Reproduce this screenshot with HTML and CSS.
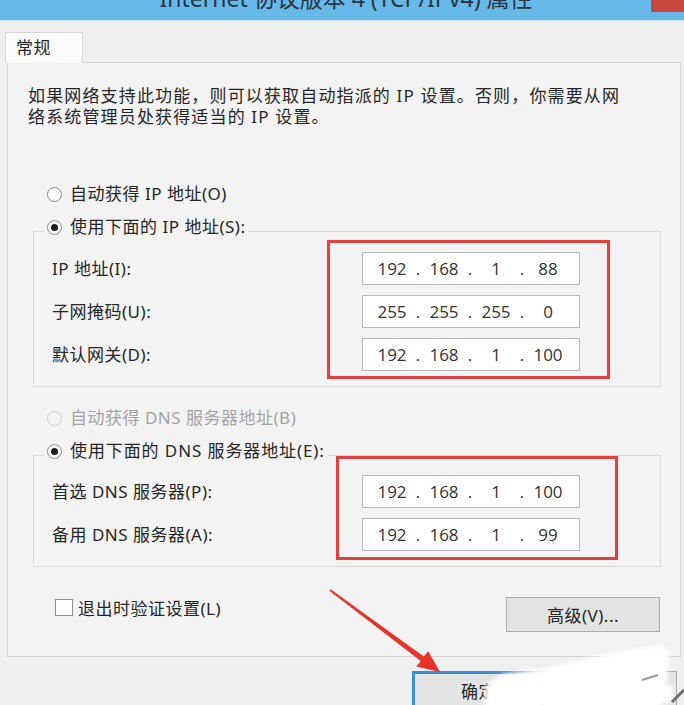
FILE: index.html
```html
<!DOCTYPE html>
<html lang="zh-CN">
<head>
<meta charset="utf-8">
<title>Internet 协议版本 4 (TCP/IPv4) 属性</title>
<link rel="stylesheet" href="styles.css">
</head>
<body>
<div class="window">
  <header class="titlebar">
    <span class="title">Internet 协议版本 4 (TCP/IPv4) 属性</span>
    <span class="close"></span>
  </header>
  <div class="client">
    <nav class="tabs"><div class="tab">常规</div></nav>
    <section class="panel">
      <p class="desc"><span>如果网络支持此功能，则可以获取自动指派的 IP 设置。否则，你需要从网</span><br><span>络系统管理员处获得适当的 IP 设置。</span></p>

      <label class="radio-row first"><input type="radio" name="ip" class="radio"><span>自动获得 IP 地址(O)</span></label>
      <fieldset class="group group-ip">
        <legend><label class="radio-row"><input type="radio" name="ip" class="radio" checked><span>使用下面的 IP 地址(S):</span></label></legend>
        <div class="fields">
          <div class="labels">
            <div class="label">IP 地址(I):</div>
            <div class="label">子网掩码(U):</div>
            <div class="label">默认网关(D):</div>
          </div>
          <div class="mark">
            <div class="ip"><span class="oct">192</span><span class="dot">.</span><span class="oct">168</span><span class="dot">.</span><span class="oct">1</span><span class="dot">.</span><span class="oct">88</span></div>
            <div class="ip"><span class="oct">255</span><span class="dot">.</span><span class="oct">255</span><span class="dot">.</span><span class="oct">255</span><span class="dot">.</span><span class="oct">0</span></div>
            <div class="ip"><span class="oct">192</span><span class="dot">.</span><span class="oct">168</span><span class="dot">.</span><span class="oct">1</span><span class="dot">.</span><span class="oct">100</span></div>
          </div>
        </div>
      </fieldset>

      <label class="radio-row second disabled"><input type="radio" name="dns" class="radio" disabled><span>自动获得 DNS 服务器地址(B)</span></label>
      <fieldset class="group group-dns">
        <legend><label class="radio-row"><input type="radio" name="dns" class="radio" checked><span>使用下面的 DNS 服务器地址(E):</span></label></legend>
        <div class="fields">
          <div class="labels">
            <div class="label">首选 DNS 服务器(P):</div>
            <div class="label">备用 DNS 服务器(A):</div>
          </div>
          <div class="mark">
            <div class="ip"><span class="oct">192</span><span class="dot">.</span><span class="oct">168</span><span class="dot">.</span><span class="oct">1</span><span class="dot">.</span><span class="oct">100</span></div>
            <div class="ip"><span class="oct">192</span><span class="dot">.</span><span class="oct">168</span><span class="dot">.</span><span class="oct">1</span><span class="dot">.</span><span class="oct">99</span></div>
          </div>
        </div>
      </fieldset>

      <div class="panel-foot">
        <label class="check-row"><input type="checkbox" class="check"><span>退出时验证设置(L)</span></label>
        <button class="btn btn-adv" type="button">高级(V)...</button>
      </div>
    </section>
    <div class="actions">
      <button class="btn btn-ok" type="button">确定</button>
      <button class="btn btn-cancel" type="button">取消</button>
    </div>
  </div>

  <!-- red pointer arrow and the white smear painted over the dialog -->
  <svg class="overlay" width="684" height="705" viewBox="0 0 684 705">
    <defs>
      <filter id="soft" x="-10%" y="-30%" width="120%" height="160%">
        <feGaussianBlur stdDeviation="2"/>
      </filter>
    </defs>
    <polygon fill="#e8332c" points="330.6,589.2 423.8,656.6 428.2,651.2 440,672 416.4,666.4 420.8,661 329.4,590.8"/>
    <g fill="#ffffff" filter="url(#soft)">
      <polygon points="484,708 486,684 503,674 545,668 590,658 630,650 662,645 670,652 668,668 666,690 660,708"/>
      <polygon points="600,700 640,690 672,684 674,700 650,708 600,708"/>
    </g>
    <path d="M642 680 L658 675" stroke="#9a9a9a" stroke-width="2" fill="none"/>
    <path d="M672 702 L684 690" stroke="#6f6f6f" stroke-width="3" fill="none"/>
  </svg>
</div>
</body>
</html>
```
FILE: styles.css
```css
* {
  box-sizing: border-box;
}

html,
body {
  margin: 0;
  padding: 0;
  background: #efefef;
}

body {
  font-family: "Noto Sans", "Noto Sans CJK SC", sans-serif;
  font-size: 17px;
  letter-spacing: 0.5px;
  color: #262626;
}

.window {
  position: relative;
  width: 684px;
  height: 705px;
  overflow: hidden;
  background: #efefef;
}

/* ---------- title bar ---------- */
.titlebar {
  position: relative;
  height: 21px;
  background: #66b9e9;
  border-bottom: 1px solid #cfe6f5;
  display: flex;
  justify-content: center;
  overflow: hidden;
}

.title {
  font-size: 23px;
  line-height: 23px;
  letter-spacing: 0;
  margin-top: -13px;
  margin-left: 8px;
  color: #2a3640;
  white-space: nowrap;
}

.close {
  position: absolute;
  top: 0;
  right: 0;
  width: 33px;
  height: 12px;
  background: #c8473f;
}

/* ---------- tabs ---------- */
.client {
  padding-top: 11px;
}

.tabs {
  display: flex;
  padding-left: 5px;
  height: 30px;
}

.tab {
  width: 78px;
  height: 31px;
  padding-left: 10px;
  line-height: 29px;
  background: #fbfbfb;
  border: 1px solid #d6d6d6;
  border-bottom: none;
  position: relative;
  z-index: 1;
}

/* ---------- tab page ---------- */
.panel {
  margin-left: 7px;
  width: 674px;
  height: 595px;
  border: 1px solid #d2d2d2;
  background: #f3f3f3;
  padding-top: 22px;
}

.desc {
  margin: 0;
  padding-left: 20px;
  line-height: 21px;
  letter-spacing: 1.15px;
  white-space: nowrap;
}

.radio-row {
  display: flex;
  align-items: center;
  height: 20px;
  line-height: 20px;
  white-space: nowrap;
}

.radio-row.first {
  margin-top: 57px;
  margin-left: 39px;
}

.radio-row.second {
  margin-top: 21px;
  margin-left: 39px;
}

.radio-row.disabled {
  color: #a4a4a4;
}

.radio {
  appearance: none;
  -webkit-appearance: none;
  margin: 0 8px 0 0;
  width: 15px;
  height: 15px;
  border: 1px solid #8a8a8a;
  border-radius: 50%;
  background: #fff;
  display: grid;
  place-items: center;
  flex: none;
}

.radio:checked::after {
  content: "";
  width: 7px;
  height: 7px;
  border-radius: 50%;
  background: #1e1e1e;
}

.radio:disabled {
  border-color: #cdcdcd;
  background: #f3f3f3;
}

/* group boxes */
.group {
  margin: 13px 0 0 25px;
  width: 628px;
  padding: 0 0 7px 0;
  border: 1px solid #dcdcdc;
  min-width: 0;
}

.group-dns {
  padding-bottom: 6px;
}

.group legend {
  margin-left: 10px;
  padding: 0 3px 8px 3px;
}

.group-dns legend {
  letter-spacing: 0.9px;
}

.fields {
  display: grid;
  grid-template-columns: 293px auto;
  margin-top: -5px;
}

.group-dns .fields {
  grid-template-columns: 302px auto;
  margin-top: -13px;
}

.labels {
  display: flex;
  flex-direction: column;
  gap: 10px;
  padding-left: 18px;
  padding-top: 12px;
}

.group-dns .labels {
  padding-top: 19px;
}

.label {
  height: 33px;
  line-height: 33px;
  white-space: nowrap;
}

/* red highlight frame around the address boxes */
.mark {
  display: flex;
  flex-direction: column;
  gap: 10px;
  width: 283px;
  border: 3px solid #e0403f;
  padding: 9px 27px 5px 32px;
}

.group-dns .mark {
  width: 282px;
  padding: 16px 35px 6px 23px;
}

.ip {
  display: flex;
  width: 218px;
  height: 33px;
  padding-left: 9px;
  background: #fff;
  border: 1px solid #b9b9b9;
  align-items: center;
  font-family: "Open Sans", "Noto Sans", sans-serif;
  font-size: 17px;
  letter-spacing: 0;
  color: #333;
}

.oct {
  width: 40px;
  text-align: center;
}

.dot {
  width: 12px;
  text-align: center;
}

/* bottom of the tab page */
.panel-foot {
  display: flex;
  align-items: flex-start;
  justify-content: space-between;
  margin-top: 30px;
  padding: 0 20px 0 47px;
}

.check-row {
  display: flex;
  align-items: center;
  height: 21px;
  white-space: nowrap;
}

.check {
  appearance: none;
  -webkit-appearance: none;
  margin: 0 5px 0 0;
  width: 18px;
  height: 17px;
  border: 1px solid #8f8f8f;
  background: #fff;
}

.btn {
  font-family: "Noto Sans", "Noto Sans CJK SC", sans-serif;
  font-size: 17px;
  letter-spacing: 0.5px;
  color: #262626;
  background: #e3e3e3;
  border: 1px solid #acacac;
  padding: 0;
}

.btn-adv {
  width: 154px;
  height: 35px;
}

/* dialog buttons */
.actions {
  display: flex;
  gap: 10px;
  margin-top: 14px;
  padding-left: 412px;
}

.btn-ok {
  width: 133px;
  height: 38px;
  border: 3px solid #3d8fd9;
  background: #e4e4e4;
}

.btn-cancel {
  width: 122px;
  height: 38px;
}

.overlay {
  position: absolute;
  left: 0;
  top: 0;
  pointer-events: none;
}
```
